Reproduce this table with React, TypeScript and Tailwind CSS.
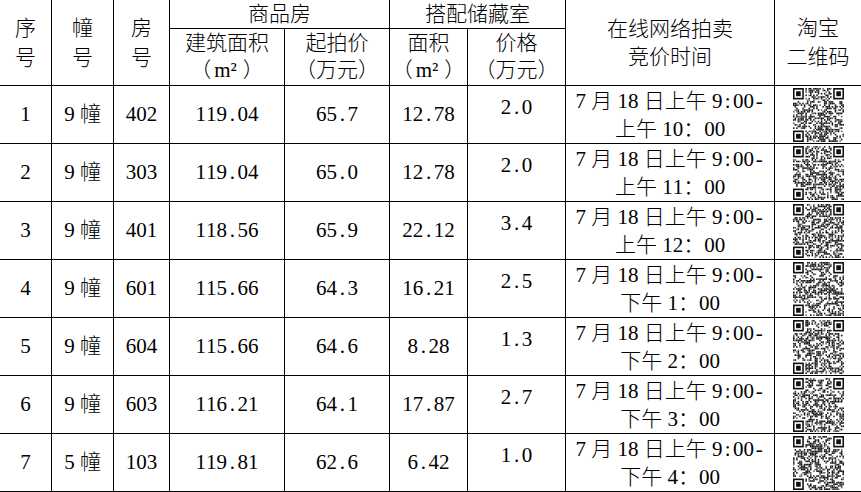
import React, { useMemo } from 'react';
import clsx from 'clsx';

type Row = {
  no: string;
  bld: string;
  room: string;
  area: string;
  start: string;
  sArea: string;
  sPrice: string;
  end: string;
};

const rows: Row[] = [
  { no: '1', bld: '9幢', room: '402', area: '119.04', start: '65.7', sArea: '12.78', sPrice: '2.0', end: '上午10：00' },
  { no: '2', bld: '9幢', room: '303', area: '119.04', start: '65.0', sArea: '12.78', sPrice: '2.0', end: '上午11：00' },
  { no: '3', bld: '9幢', room: '401', area: '118.56', start: '65.9', sArea: '22.12', sPrice: '3.4', end: '上午12：00' },
  { no: '4', bld: '9幢', room: '601', area: '115.66', start: '64.3', sArea: '16.21', sPrice: '2.5', end: '下午1：00' },
  { no: '5', bld: '9幢', room: '604', area: '115.66', start: '64.6', sArea: '8.28', sPrice: '1.3', end: '下午2：00' },
  { no: '6', bld: '9幢', room: '603', area: '116.21', start: '64.1', sArea: '17.87', sPrice: '2.7', end: '下午3：00' },
  { no: '7', bld: '5幢', room: '103', area: '119.81', start: '62.6', sArea: '6.42', sPrice: '1.0', end: '下午4：00' },
];

// mimic SimSun: half-width latin chars sit in 0.5em boxes, with Word-style
// autospace between ideographs and latin runs
const isHan = (c: string) => {
  const code = c.charCodeAt(0);
  return code >= 0x4e00 && code <= 0x9fff;
};
const isHalf = (c: string) => c.charCodeAt(0) < 0x2000;

const Txt: React.FC<{ s: string }> = ({ s }) => {
  const chars = [...s];
  return (
    <span className="whitespace-nowrap">
      {chars.map((ch, i) => {
        const prev = chars[i - 1];
        const gap =
          prev !== undefined &&
          ((isHan(prev) && isHalf(ch)) || (isHalf(prev) && isHan(ch)));
        return (
          <span
            key={i}
            className={clsx(
              isHalf(ch) ? 'inline-block w-[0.5em] text-center' : 'inline-block',
              gap && 'ml-[0.25em]'
            )}
          >
            {ch}
          </span>
        );
      })}
    </span>
  );
};

const SquareMeter: React.FC = () => (
  <span className="whitespace-nowrap">
    （<span className="pl-[3px] pr-[6px]">m²</span>）
  </span>
);

const mulberry32 = (a: number) => () => {
  a |= 0;
  a = (a + 0x6d2b79f5) | 0;
  let t = Math.imul(a ^ (a >>> 15), 1 | a);
  t = (t + Math.imul(t ^ (t >>> 7), 61 | t)) ^ t;
  return ((t ^ (t >>> 14)) >>> 0) / 4294967296;
};

const QrCode: React.FC<{ seed: number }> = ({ seed }) => {
  const n = 33;
  const cells = useMemo(() => {
    const rand = mulberry32(seed * 9973 + 17);
    const out: [number, number, string][] = [];
    const inFinder = (x: number, y: number) =>
      (x < 8 && y < 8) || (x >= n - 8 && y < 8) || (x < 8 && y >= n - 8);
    for (let y = 0; y < n; y++) {
      for (let x = 0; x < n; x++) {
        if (inFinder(x, y)) continue;
        const v = rand();
        if (v < 0.5) out.push([x, y, v < 0.12 ? '#666' : '#1a1a1a']);
      }
    }
    return out;
  }, [seed]);

  const finder = (ox: number, oy: number) => (
    <g key={`${ox}-${oy}`}>
      <rect x={ox} y={oy} width={7} height={7} fill="#111" />
      <rect x={ox + 1} y={oy + 1} width={5} height={5} fill="#fff" />
      <rect x={ox + 2} y={oy + 2} width={3} height={3} fill="#111" />
    </g>
  );

  return (
    <svg width={51} height={54} viewBox={`0 0 ${n} ${n}`} preserveAspectRatio="none">
      <rect width={n} height={n} fill="#fff" />
      {cells.map(([x, y, c]) => (
        <rect key={`${x}-${y}`} x={x} y={y} width={1} height={1} fill={c} />
      ))}
      {finder(0, 0)}
      {finder(n - 7, 0)}
      {finder(0, n - 7)}
    </svg>
  );
};

const cell = 'bg-white flex items-center justify-center text-center';

export default function App() {
  return (
    <div className="w-[861px] h-[492px] overflow-hidden bg-white">
      <div className="grid grid-cols-[51px_61px_55px_114px_104px_77px_97px_208px_86px] grid-rows-[28px_56px_repeat(7,57px)] gap-px bg-black border-b border-black text-[21px] text-black font-light font-['Liberation_Serif','Noto_Sans_CJK_SC',serif]">
        {/* header */}
        <div className={clsx(cell, 'row-span-2 flex-col leading-[30px]')}>
          <div>序</div>
          <div>号</div>
        </div>
        <div className={clsx(cell, 'row-span-2 flex-col leading-[30px]')}>
          <div>幢</div>
          <div>号</div>
        </div>
        <div className={clsx(cell, 'row-span-2 flex-col leading-[30px]')}>
          <div>房</div>
          <div>号</div>
        </div>
        <div className={clsx(cell, 'col-span-2 leading-none')}>商品房</div>
        <div className={clsx(cell, 'col-span-2 leading-none')}>搭配储藏室</div>
        <div className={clsx(cell, 'row-span-2 flex-col leading-[28px]')}>
          <div>在线网络拍卖</div>
          <div>竞价时间</div>
        </div>
        <div className={clsx(cell, 'row-span-2 flex-col leading-[29px]')}>
          <div>淘宝</div>
          <div>二维码</div>
        </div>
        <div className={clsx(cell, 'flex-col leading-[27px]')}>
          <div>建筑面积</div>
          <div><SquareMeter /></div>
        </div>
        <div className={clsx(cell, 'flex-col leading-[27px]')}>
          <div>起拍价</div>
          <div>（万元）</div>
        </div>
        <div className={clsx(cell, 'flex-col leading-[27px]')}>
          <div>面积</div>
          <div><SquareMeter /></div>
        </div>
        <div className={clsx(cell, 'flex-col leading-[27px]')}>
          <div>价格</div>
          <div>（万元）</div>
        </div>

        {/* body */}
        {rows.map((r, i) => (
          <React.Fragment key={r.no}>
            <div className={cell}><Txt s={r.no} /></div>
            <div className={cell}><Txt s={r.bld} /></div>
            <div className={cell}><Txt s={r.room} /></div>
            <div className={cell}><Txt s={r.area} /></div>
            <div className={cell}><Txt s={r.start} /></div>
            <div className={cell}><Txt s={r.sArea} /></div>
            <div className="bg-white text-center pt-[7px] leading-[28px]"><Txt s={r.sPrice} /></div>
            <div className={clsx(cell, 'flex-col leading-[28px]')}>
              <div><Txt s="7月18日上午9:00-" /></div>
              <div><Txt s={r.end} /></div>
            </div>
            <div className={clsx(cell, 'pt-px')}>
              <QrCode seed={i + 1} />
            </div>
          </React.Fragment>
        ))}
      </div>
    </div>
  );
}
